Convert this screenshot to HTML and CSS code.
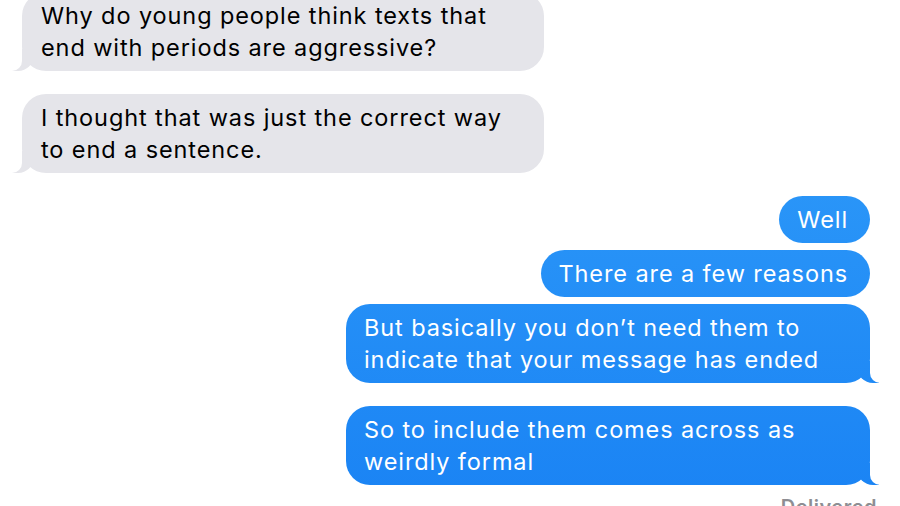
FILE: index.html
```html
<!DOCTYPE html>
<html lang="en">

<head>
    <meta charset="UTF-8">
    <meta name="viewport" content="width=device-width, initial-scale=1.0">
    <title>Messages</title>
    <link rel="stylesheet" href="styles.css">
</head>

<body>
    <div class="chat">
        <div class="group">
            <div class="bubble received tail">Why do young people think texts that end with periods are aggressive?</div>
        </div>
        <div class="group">
            <div class="bubble received tail">I thought that was just the correct way to end a sentence.</div>
        </div>
        <div class="group sent-group">
            <div class="bubble sent">Well</div>
            <div class="bubble sent">There are a few reasons</div>
            <div class="bubble sent tail">But basically you don’t need them to indicate that your message has ended</div>
        </div>
        <div class="group sent-group">
            <div class="bubble sent tail">So to include them comes across as weirdly formal</div>
            <div class="status">Delivered</div>
        </div>
    </div>
</body>

</html>
```

FILE: styles.css
```css
body {
    margin: 0;
    padding: 0;
    background: #ffffff;
    font-family: Inter, 'Liberation Sans', Arial, sans-serif;
    overflow: hidden;
}

.chat {
    display: flex;
    flex-direction: column;
    gap: 23px;
    padding: 0 30px 0 22px;
    margin-top: -8px;
}

.group {
    display: flex;
    flex-direction: column;
    align-items: flex-start;
    gap: 7px;
}

.sent-group {
    align-items: flex-end;
}

.bubble {
    position: relative;
    max-width: 484px;
    padding: 8px 22px 7px 18px;
    border-radius: 24px;
    font-size: 23.5px;
    line-height: 32px;
    letter-spacing: 0.9px;
}

.received {
    background: #e5e5ea;
    color: #000000;
    padding-left: 19px;
    padding-right: 19px;
}

.sent {
    color: #ffffff;
    background: linear-gradient(to bottom, #33a0fa, #1a83f4) fixed;
}

/* tails */
.tail::before,
.tail::after {
    content: "";
    position: absolute;
    bottom: 0;
    height: 22px;
}

.received.tail::before {
    left: -10px;
    width: 22px;
    background: #e5e5ea;
    border-bottom-right-radius: 16px;
}

.received.tail::after {
    left: -12px;
    width: 12px;
    background: #ffffff;
    border-bottom-right-radius: 10px;
}

.sent.tail::before {
    right: -9px;
    width: 22px;
    background: linear-gradient(to bottom, #33a0fa, #1a83f4) fixed;
    border-bottom-left-radius: 16px;
}

.sent.tail::after {
    right: -11px;
    width: 11px;
    background: #ffffff;
    border-bottom-left-radius: 10px;
}

.status {
    margin-top: 3px;
    margin-right: -7px;
    font-size: 20px;
    font-weight: 600;
    letter-spacing: 0.5px;
    color: #8e8e93;
}
```
